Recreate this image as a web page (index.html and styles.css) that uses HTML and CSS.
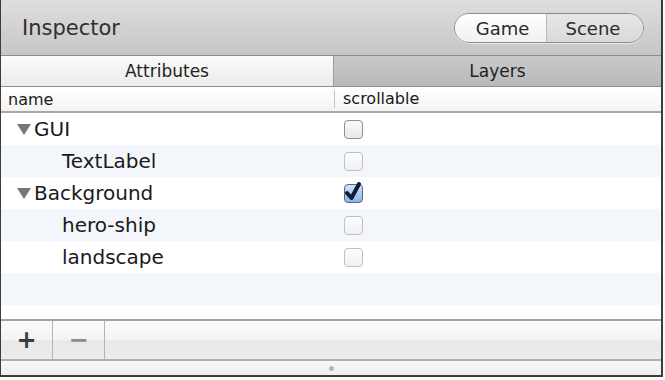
FILE: index.html
```html
<!DOCTYPE html>
<html lang="en">

<head>
    <meta charset="UTF-8">
    <meta name="viewport" content="width=device-width, initial-scale=1.0">
    <title>Inspector</title>
    <link rel="stylesheet" href="styles.css">
</head>

<body>
    <div class="window">
        <div class="titlebar">
            <span class="title">Inspector</span>
            <div class="segmented">
                <span class="seg active">Game</span>
                <span class="seg">Scene</span>
            </div>
        </div>

        <div class="tabs">
            <div class="tab active">Attributes</div>
            <div class="tab">Layers</div>
        </div>

        <div class="colhead">
            <div class="col-name">name</div>
            <div class="col-flag">scrollable</div>
        </div>

        <div class="rows">
            <div class="row">
                <div class="col-name"><span class="arrow"></span>GUI</div>
                <div class="col-flag"><span class="check"></span></div>
            </div>
            <div class="row child">
                <div class="col-name">TextLabel</div>
                <div class="col-flag"><span class="check faint"></span></div>
            </div>
            <div class="row">
                <div class="col-name"><span class="arrow"></span>Background</div>
                <div class="col-flag">
                    <span class="check on">
                        <svg width="22" height="24" viewBox="0 0 22 24">
                            <path d="M4 13 L8.5 18 L16 4" fill="none" stroke="#0f1c33" stroke-width="4" stroke-linecap="round" stroke-linejoin="round"/>
                        </svg>
                    </span>
                </div>
            </div>
            <div class="row child">
                <div class="col-name">hero-ship</div>
                <div class="col-flag"><span class="check faint"></span></div>
            </div>
            <div class="row child">
                <div class="col-name">landscape</div>
                <div class="col-flag"><span class="check faint"></span></div>
            </div>
            <div class="row"></div>
        </div>

        <div class="toolbar">
            <div class="tool plus">+</div>
            <div class="tool minus">&minus;</div>
        </div>

        <div class="resize"><span class="grip"></span></div>
    </div>
</body>

</html>
```

FILE: styles.css
```css
body {
    margin: 0;
    padding: 0;
    background: #fafafa;
    font-family: 'DejaVu Sans', Verdana, sans-serif;
    color: #1a1a1a;
}

.window {
    width: 663px;
    height: 377px;
    box-sizing: border-box;
    display: flex;
    flex-direction: column;
    border-left: 1px solid #3c3c3c;
    border-right: 2px solid #3c3c3c;
    border-bottom: 2px solid #3c3c3c;
    background: white;
}

.titlebar {
    height: 55px;
    flex-shrink: 0;
    display: flex;
    align-items: center;
    justify-content: space-between;
    padding: 0 17px 0 21px;
    background: linear-gradient(#dedede, #c6c6c6);
    border-bottom: 1px solid #8e8e8e;
}

.title {
    font-size: 21px;
    color: #2f2f2f;
    margin-top: 1px;
}

.segmented {
    display: flex;
    height: 28px;
    margin-top: 1px;
    border: 1px solid #8a8a8a;
    border-radius: 15px;
    overflow: hidden;
    box-shadow: 0 1px 0 rgba(255, 255, 255, 0.6);
}

.seg {
    display: flex;
    align-items: center;
    justify-content: center;
    font-size: 18px;
    color: #2a2a2a;
    background: linear-gradient(#e6e6e6, #dadada);
}

.seg.active {
    width: 87px;
    padding-left: 4px;
    background: linear-gradient(#ffffff, #f1f1f1);
    border-right: 1px solid #b8b8b8;
}

.seg:last-child {
    width: 92px;
    padding-right: 4px;
}

.tabs {
    height: 30px;
    flex-shrink: 0;
    display: flex;
    border-bottom: 1px solid #8f8f8f;
}

.tab {
    display: flex;
    align-items: center;
    justify-content: center;
    font-size: 17px;
    color: #222;
    background: linear-gradient(#c9c9c9, #b9b9b9);
}

.tab:first-child {
    width: 332px;
    border-right: 1px solid #9c9c9c;
}

.tab:last-child {
    flex: 1;
}

.tab.active {
    background: linear-gradient(#fbfbfb, #ececec);
}

.colhead {
    height: 24px;
    flex-shrink: 0;
    display: flex;
    align-items: center;
    font-size: 16px;
    background: linear-gradient(#ffffff, #f3f3f3);
    border-bottom: 2px solid #a9a9a9;
}

.colhead .col-name {
    padding-left: 7px;
}

.colhead .col-flag {
    border-left: 1px solid #c4c4c4;
    padding-left: 8px;
    height: 18px;
    line-height: 18px;
}

.col-name {
    width: 333px;
    box-sizing: border-box;
    display: flex;
    align-items: center;
}

.col-flag {
    flex: 1;
    display: flex;
    align-items: center;
}

.rows {
    flex: 1;
}

.row {
    height: 32px;
    display: flex;
    align-items: center;
    font-size: 20px;
}

.row:nth-child(even) {
    background: #f3f7fc;
}

.row .col-name {
    padding-left: 16px;
}

.row.child .col-name {
    padding-left: 61px;
}

.row .col-flag {
    padding-left: 10px;
}

.arrow {
    width: 0;
    height: 0;
    margin-right: 3px;
    border-left: 7px solid transparent;
    border-right: 7px solid transparent;
    border-top: 11px solid #777;
}

.check {
    position: relative;
    width: 17px;
    height: 17px;
    border: 1px solid #8e8e8e;
    border-radius: 4px;
    background: linear-gradient(#fafafa, #e8e8e8);
}

.check.faint {
    border-color: #c0c0c0;
    background: linear-gradient(#fdfdfd, #f1f1f1);
}

.check.on {
    border-color: #4f6a94;
    background: linear-gradient(#d2e3fb, #8eb2e8);
}

.check svg {
    position: absolute;
    left: -2px;
    top: -5px;
}

.toolbar {
    height: 38px;
    flex-shrink: 0;
    display: flex;
    border-top: 2px solid #a4a4a4;
    border-bottom: 2px solid #b0b0b0;
    background: linear-gradient(#fafafa 0%, #f3f3f3 50%, #e8e8e8 52%, #ececec 100%);
}

.tool {
    width: 51px;
    display: flex;
    align-items: center;
    justify-content: center;
    border-right: 1px solid #b4b4b4;
    font-size: 24px;
    font-weight: bold;
}

.tool.plus {
    color: #3a3a3a;
}

.tool.minus {
    color: #8a8a8a;
}

.resize {
    height: 14px;
    flex-shrink: 0;
    display: flex;
    align-items: center;
    justify-content: center;
    background: linear-gradient(#f8f8f8, #eeeeee);
}

.grip {
    width: 5px;
    height: 5px;
    border-radius: 50%;
    background: #b5b5b5;
}
```
